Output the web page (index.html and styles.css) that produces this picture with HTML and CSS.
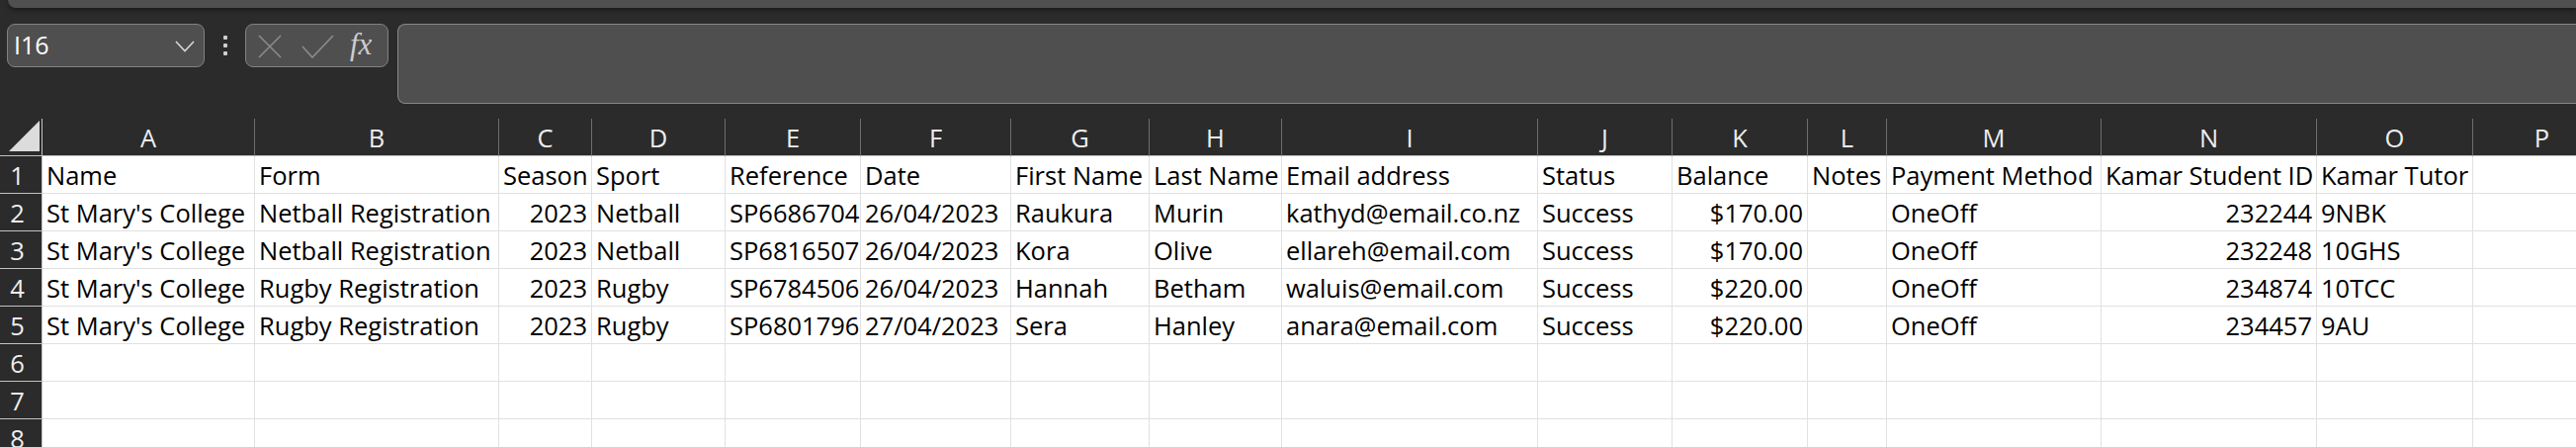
FILE: index.html
```html
<!DOCTYPE html>
<html>
<head>
<meta charset="utf-8">
<link rel="stylesheet" href="styles.css">
</head>
<body>
<div class="topbar"></div>
<div class="toolbar">
  <div class="namebox">
    <span class="ref">I16</span>
    <svg class="chev" width="20" height="12" viewBox="0 0 20 12"><polyline points="1,1 10,10.5 19,1" fill="none" stroke="#d6d6d6" stroke-width="1.6"/></svg>
  </div>
  <div class="more"><i></i><i></i><i></i></div>
  <div class="fnbox">
    <svg class="ic-x" width="24" height="24" viewBox="0 0 24 24"><path d="M1 1L23 23M23 1L1 23" stroke="#8c8c8c" stroke-width="1.6" fill="none"/></svg>
    <svg class="ic-check" width="33" height="25" viewBox="0 0 33 25"><polyline points="1,12 11,23 32,1" fill="none" stroke="#8c8c8c" stroke-width="1.6"/></svg>
    <span class="fx">fx</span>
  </div>
  <div class="formula"></div>
</div>
<div class="sheet">
  <div class="corner"><svg width="31" height="31" viewBox="0 0 31 31"><polygon points="0,31 31,31 31,0" fill="#dcdcdc"/></svg></div>
  <div class="ch">A</div><div class="ch">B</div><div class="ch">C</div><div class="ch">D</div><div class="ch">E</div><div class="ch">F</div><div class="ch">G</div><div class="ch">H</div><div class="ch">I</div><div class="ch">J</div><div class="ch">K</div><div class="ch">L</div><div class="ch">M</div><div class="ch">N</div><div class="ch">O</div><div class="ch">P</div>

  <div class="rh">1</div>
  <div class="c">Name</div><div class="c">Form</div><div class="c">Season</div><div class="c">Sport</div><div class="c">Reference</div><div class="c">Date</div><div class="c">First Name</div><div class="c">Last Name</div><div class="c">Email address</div><div class="c">Status</div><div class="c">Balance</div><div class="c">Notes</div><div class="c">Payment Method</div><div class="c">Kamar Student ID</div><div class="c">Kamar Tutor</div><div class="c"></div>

  <div class="rh">2</div>
  <div class="c">St Mary's College</div><div class="c">Netball Registration</div><div class="c r">2023</div><div class="c">Netball</div><div class="c">SP6686704</div><div class="c">26/04/2023</div><div class="c">Raukura</div><div class="c">Murin</div><div class="c">kathyd@email.co.nz</div><div class="c">Success</div><div class="c r">$170.00</div><div class="c"></div><div class="c">OneOff</div><div class="c r">232244</div><div class="c">9NBK</div><div class="c"></div>

  <div class="rh">3</div>
  <div class="c">St Mary's College</div><div class="c">Netball Registration</div><div class="c r">2023</div><div class="c">Netball</div><div class="c">SP6816507</div><div class="c">26/04/2023</div><div class="c">Kora</div><div class="c">Olive</div><div class="c">ellareh@email.com</div><div class="c">Success</div><div class="c r">$170.00</div><div class="c"></div><div class="c">OneOff</div><div class="c r">232248</div><div class="c">10GHS</div><div class="c"></div>

  <div class="rh">4</div>
  <div class="c">St Mary's College</div><div class="c">Rugby Registration</div><div class="c r">2023</div><div class="c">Rugby</div><div class="c">SP6784506</div><div class="c">26/04/2023</div><div class="c">Hannah</div><div class="c">Betham</div><div class="c">waluis@email.com</div><div class="c">Success</div><div class="c r">$220.00</div><div class="c"></div><div class="c">OneOff</div><div class="c r">234874</div><div class="c">10TCC</div><div class="c"></div>

  <div class="rh">5</div>
  <div class="c">St Mary's College</div><div class="c">Rugby Registration</div><div class="c r">2023</div><div class="c">Rugby</div><div class="c">SP6801796</div><div class="c">27/04/2023</div><div class="c">Sera</div><div class="c">Hanley</div><div class="c">anara@email.com</div><div class="c">Success</div><div class="c r">$220.00</div><div class="c"></div><div class="c">OneOff</div><div class="c r">234457</div><div class="c">9AU</div><div class="c"></div>

  <div class="rh">6</div>
  <div class="c"></div><div class="c"></div><div class="c"></div><div class="c"></div><div class="c"></div><div class="c"></div><div class="c"></div><div class="c"></div><div class="c"></div><div class="c"></div><div class="c"></div><div class="c"></div><div class="c"></div><div class="c"></div><div class="c"></div><div class="c"></div>

  <div class="rh">7</div>
  <div class="c"></div><div class="c"></div><div class="c"></div><div class="c"></div><div class="c"></div><div class="c"></div><div class="c"></div><div class="c"></div><div class="c"></div><div class="c"></div><div class="c"></div><div class="c"></div><div class="c"></div><div class="c"></div><div class="c"></div><div class="c"></div>

  <div class="rh">8</div>
  <div class="c"></div><div class="c"></div><div class="c"></div><div class="c"></div><div class="c"></div><div class="c"></div><div class="c"></div><div class="c"></div><div class="c"></div><div class="c"></div><div class="c"></div><div class="c"></div><div class="c"></div><div class="c"></div><div class="c"></div><div class="c"></div>
</div>
</body>
</html>
```
FILE: styles.css
```css
html, body {
  margin: 0;
  padding: 0;
}
body {
  width: 2606px;
  height: 452px;
  overflow: hidden;
  background: #2b2b2b;
  font-family: "Open Sans", "Noto Sans", sans-serif;
}
.topbar {
  height: 8px;
  margin-left: 8px;
  background: #4f4f4f;
  border-bottom-left-radius: 9px;
  box-shadow: 0 2px 5px rgba(0, 0, 0, 0.45);
}
.toolbar {
  display: flex;
  align-items: flex-start;
  padding: 16px 0 0 7px;
  height: 81px;
}
.namebox {
  box-sizing: border-box;
  width: 200px;
  height: 44px;
  background: #4f4f4f;
  border: 1px solid #828282;
  border-radius: 8px;
  display: flex;
  align-items: center;
  justify-content: space-between;
  padding: 0 9px 0 6px;
}
.ref {
  font-family: "Open Sans", "Noto Sans", sans-serif;
  font-size: 25px;
  color: #ffffff;
  line-height: 1;
  margin-top: -1px;
}
.chev {
  display: block;
  margin-top: 2px;
}
.more {
  width: 41px;
  height: 44px;
  display: flex;
  flex-direction: column;
  align-items: center;
  justify-content: center;
  gap: 4px;
}
.more i {
  display: block;
  width: 4px;
  height: 4px;
  background: #cfcfcf;
  border-radius: 1px;
}
.fnbox {
  box-sizing: border-box;
  width: 145px;
  height: 44px;
  background: #4f4f4f;
  border: 1px solid #828282;
  border-radius: 8px;
  display: flex;
  align-items: center;
  padding-left: 12px;
}
.ic-x {
  display: block;
  margin-top: 2px;
}
.ic-check {
  display: block;
  margin-left: 20px;
  margin-top: 2px;
}
.fx {
  font-family: "Liberation Serif", "DejaVu Serif", serif;
  font-style: italic;
  font-size: 31px;
  color: #cdcdcd;
  margin-left: 16px;
  line-height: 1;
  margin-top: -4px;
}
.formula {
  box-sizing: border-box;
  flex: 1;
  margin-left: 9px;
  height: 81px;
  background: #4f4f4f;
  border: 1px solid #878787;
  border-right: none;
  border-radius: 8px 0 0 8px;
}
.sheet {
  margin-top: 15px;
  display: grid;
  grid-template-columns: 43px 215px 247px 94px 135px 137px 152px 140px 134px 259px 136px 137px 80px 217px 218px 158px 140px;
  grid-auto-rows: 38px;
  font-size: 25.5px;
}
.sheet > div {
  box-sizing: border-box;
  border-right: 1px solid #e1e1e1;
  border-bottom: 1px solid #e1e1e1;
  display: flex;
  align-items: flex-end;
  padding: 0 4px 3px 4px;
  line-height: 30px;
  white-space: nowrap;
  overflow: visible;
}
.sheet > .c {
  background: #ffffff;
  color: #000000;
}
.sheet > .r {
  justify-content: flex-end;
}
.sheet > .corner {
  background: #2b2b2b;
  border-right: 1px solid #c2c2c2;
  border-bottom: 1px solid #c2c2c2;
  padding: 0 2px 4px 0;
  justify-content: flex-end;
}
.corner svg {
  display: block;
}
.sheet > .ch {
  background: #2b2b2b;
  color: #eeeeee;
  justify-content: center;
  border-right: 1px solid #6e6e6e;
  border-bottom: 1px solid #c2c2c2;
}
.sheet > .rh {
  background: #2b2b2b;
  color: #eeeeee;
  justify-content: center;
  padding-right: 11px;
  border-right: 1px solid #c2c2c2;
  border-bottom: 1px solid #c2c2c2;
}
```
